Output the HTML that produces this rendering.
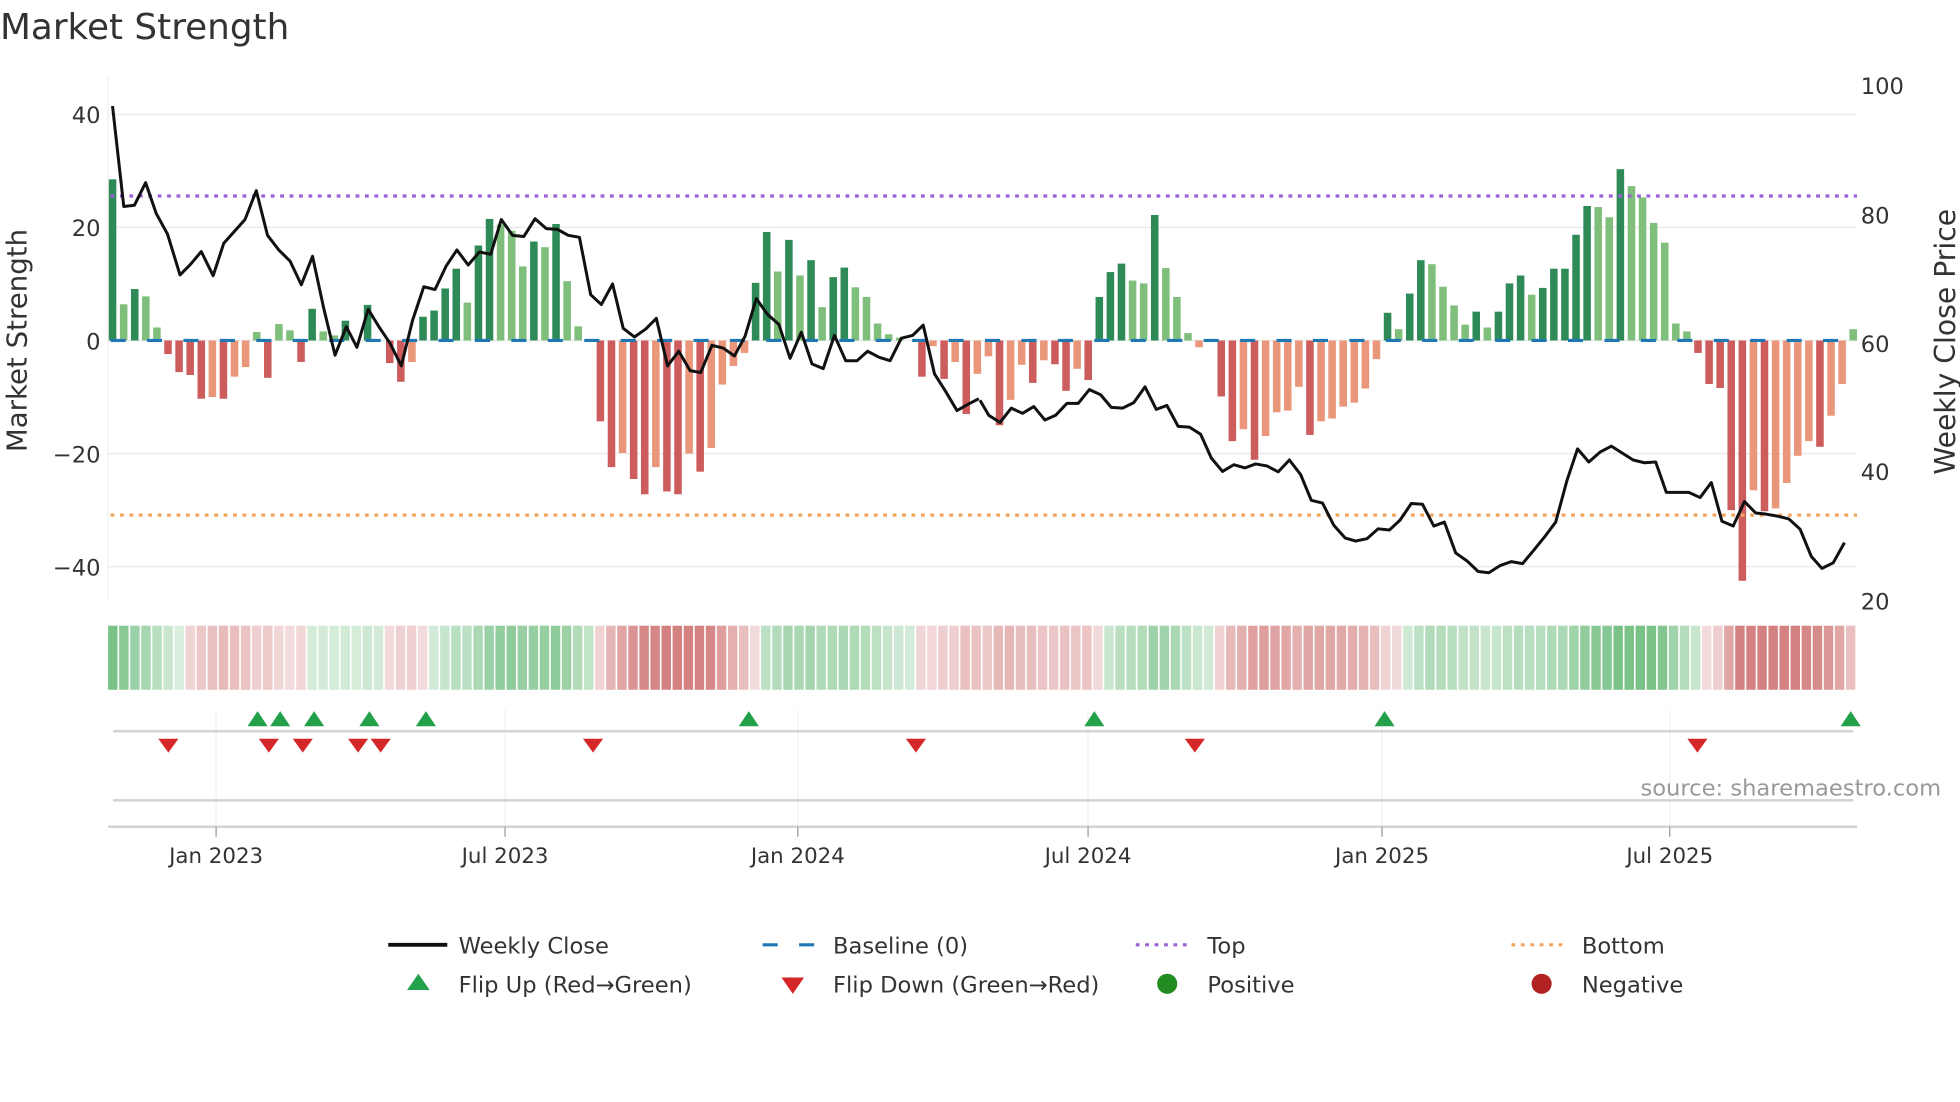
<!DOCTYPE html>
<html><head><meta charset="utf-8"><style>
html,body{margin:0;padding:0;background:#fff;}
svg{display:block;font-family:"DejaVu Sans","Liberation Sans",sans-serif;}
</style></head><body>
<svg id="s" width="1960" height="1102" viewBox="0 0 1560 877.1" xmlns="http://www.w3.org/2000/svg">
<defs><clipPath id="hc"><rect x="86" y="490" width="1392" height="70"/></clipPath></defs>
<rect width="1560" height="878" fill="#fff"/>
<text x="0" y="31" font-size="28.5" fill="#333">Market Strength</text>
<line x1="86" y1="62" x2="86" y2="478" stroke="#eee" stroke-width="1"/>
<g stroke="#ebebeb" stroke-width="1.2">
<line x1="86" y1="91" x2="1478" y2="91"/><line x1="86" y1="181" x2="1478" y2="181"/>
<line x1="86" y1="271" x2="1478" y2="271"/><line x1="86" y1="361" x2="1478" y2="361"/>
<line x1="86" y1="451" x2="1478" y2="451"/></g>
<g font-size="18" fill="#333" text-anchor="end">
<text x="80" y="98">40</text><text x="80" y="188">20</text><text x="80" y="278">0</text>
<text x="80" y="368">−20</text><text x="80" y="458">−40</text></g>
<g font-size="18" fill="#333">
<text x="1481" y="75">100</text><text x="1481" y="178">80</text><text x="1481" y="280">60</text>
<text x="1481" y="382">40</text><text x="1481" y="485">20</text></g>
<text transform="translate(21,271) rotate(-90)" font-size="22" fill="#333" text-anchor="middle">Market Strength</text>
<text transform="translate(1556,272) rotate(-90)" font-size="22.5" fill="#333" text-anchor="middle">Weekly Close Price</text>
<g id="bars"></g>
<line x1="88" y1="271" x2="1478" y2="271" stroke="#1f77b4" stroke-width="2.5" stroke-dasharray="12 17"/>
<line x1="88" y1="156" x2="1478" y2="156" stroke="#9b5fd6" stroke-width="2.5" stroke-dasharray="3 4.5"/>
<line x1="88" y1="410" x2="1478" y2="410" stroke="#f2a35e" stroke-width="2.5" stroke-dasharray="3 4.5"/>
<polyline fill="none" stroke="#111" stroke-width="3" vector-effect="non-scaling-stroke" stroke-linejoin="round" transform="matrix(0.4975 0 0 0.3148 0 0)" points="180,268 198,522 215,519 233,462 250,540 268,592 288,695 305,668 322,636 341,697 358,615 375,585 392,555 410,482 428,595 446,632 464,660 482,720 500,648 518,780 536,898 554,826 571,878 589,782 607,828 624,868 642,925 660,810 678,725 696,732 714,672 731,632 749,670 767,637 785,643 802,555 820,595 838,598 856,553 874,578 892,580 909,595 927,600 945,745 962,770 980,718 997,830 1015,852 1033,832 1050,805 1068,925 1086,888 1104,937 1121,942 1139,873 1157,880 1175,900 1192,850 1210,755 1228,795 1246,820 1264,906 1282,840 1299,920 1317,932 1335,848 1353,912 1371,912 1388,888 1406,903 1424,912 1442,855 1460,848 1477,822 1495,945 1513,990 1531,1038 1549,1022 1566,1008"/>
<polyline fill="none" stroke="#111" stroke-width="3" vector-effect="non-scaling-stroke" stroke-linejoin="round" transform="matrix(0.4975 0 0 0.3148 780 0)" points="0,1012 14,1050 32,1068 50,1032 68,1045 86,1028 104,1062 121,1050 139,1020 157,1020 175,985 193,998 210,1030 228,1032 246,1018 264,978 282,1035 299,1025 317,1078 335,1080 353,1098 370,1158 388,1192 406,1175 424,1183 441,1173 459,1178 477,1193 495,1163 513,1200 530,1265 548,1272 566,1328 584,1360 601,1368 619,1362 637,1337 655,1340 672,1315 690,1273 708,1275 726,1330 743,1320 761,1398 779,1418 797,1445 814,1448 832,1430 850,1420 868,1425 885,1393 903,1358 921,1320 939,1215 956,1135 974,1168 992,1143 1010,1128 1027,1145 1045,1163 1063,1170 1081,1168 1098,1245 1116,1245 1134,1245 1152,1258 1170,1220 1187,1318 1205,1330 1223,1268 1241,1297 1258,1300 1276,1305 1294,1312 1312,1338 1330,1407 1347,1437 1365,1423 1383,1372"/>
<g id="heat" clip-path="url(#hc)"></g>
<g stroke="#eef0f2" stroke-width="1">
<line x1="172" y1="565" x2="172" y2="658"/><line x1="402" y1="565" x2="402" y2="658"/>
<line x1="635" y1="565" x2="635" y2="658"/><line x1="866" y1="565" x2="866" y2="658"/>
<line x1="1100" y1="565" x2="1100" y2="658"/><line x1="1329" y1="565" x2="1329" y2="658"/></g>
<line x1="90" y1="582" x2="1475" y2="582" stroke="#d3d3d3" stroke-width="2"/>
<line x1="90" y1="637" x2="1475" y2="637" stroke="#d3d3d3" stroke-width="2"/>
<line x1="86" y1="658" x2="1478" y2="658" stroke="#d3d3d3" stroke-width="2"/>
<g stroke="#999" stroke-width="1">
<line x1="172" y1="658" x2="172" y2="666"/><line x1="402" y1="658" x2="402" y2="666"/>
<line x1="635" y1="658" x2="635" y2="666"/><line x1="866" y1="658" x2="866" y2="666"/>
<line x1="1100" y1="658" x2="1100" y2="666"/><line x1="1329" y1="658" x2="1329" y2="666"/></g>
<g id="mk"></g>
<text x="1545" y="633" font-size="18" fill="#999" text-anchor="end">source: sharemaestro.com</text>
<g font-size="17" fill="#333" text-anchor="middle">
<text x="172" y="687">Jan 2023</text><text x="402" y="687">Jul 2023</text><text x="635" y="687">Jan 2024</text>
<text x="866" y="687">Jul 2024</text><text x="1100" y="687">Jan 2025</text><text x="1329" y="687">Jul 2025</text></g>
<g font-size="18" fill="#333">
<line x1="309" y1="752" x2="356" y2="752" stroke="#111" stroke-width="3"/>
<text x="365" y="759">Weekly Close</text>
<line x1="607" y1="752" x2="650" y2="752" stroke="#1f77b4" stroke-width="2.5" stroke-dasharray="12 17"/>
<text x="663" y="759">Baseline (0)</text>
<line x1="904" y1="752" x2="948" y2="752" stroke="#9b5fd6" stroke-width="2.5" stroke-dasharray="3 4.5"/>
<text x="961" y="759">Top</text>
<line x1="1203" y1="752" x2="1247" y2="752" stroke="#f2a35e" stroke-width="2.5" stroke-dasharray="3 4.5"/>
<text x="1259" y="759">Bottom</text>
<polygon points="324,788 342,788 333,775" fill="#22a04a"/>
<text x="365" y="790">Flip Up (Red→Green)</text>
<polygon points="622,778 640,778 631,791" fill="#d62728"/>
<text x="663" y="790">Flip Down (Green→Red)</text>
<circle cx="929" cy="783" r="8" fill="#228b22"/>
<text x="961" y="790">Positive</text>
<circle cx="1227" cy="783" r="8" fill="#b22222"/>
<text x="1259" y="790">Negative</text>
</g>
</svg>
<script>
var v=[28.5,6.4,9.1,7.8,2.3,-2.4,-5.6,-6.1,-10.3,-10,-10.3,-6.4,-4.7,1.5,-6.6,2.9,1.8,-3.8,5.6,1.6,0.9,3.5,0,6.3,0,-4,-7.3,-3.8,4.2,5.3,9.2,12.7,6.7,16.8,21.5,20.5,19.4,13.1,17.5,16.5,20.6,10.5,2.5,0,-14.3,-22.4,-19.9,-24.5,-27.2,-22.4,-26.7,-27.2,-20,-23.2,-19,-7.8,-4.5,-2.2,10.2,19.2,12.2,17.8,11.5,14.2,5.9,11.2,12.9,9.4,7.7,3,1.1,0.5,0,-6.4,-1,-6.8,-3.8,-13,-5.9,-2.8,
-15,-10.5,-4.3,-7.5,-3.5,-4.2,-8.9,-5,-7,7.7,12.1,13.6,10.6,10.1,22.2,12.8,7.7,1.3,-1.2,0,-9.9,-17.8,-15.7,-21.1,-16.9,-12.7,-12.4,-8.2,-16.7,-14.3,-13.8,-11.7,-11,-8.5,-3.3,4.9,2,8.3,14.2,13.5,9.5,6.2,2.8,5.1,2.3,5.1,10.1,11.5,8.1,9.3,12.7,12.7,18.7,23.8,23.6,21.8,30.3,27.3,25.3,20.8,17.3,3,1.6,-2.2,-7.7,-8.4,-30,-42.5,-26.5,-30.2,-29.7,-25.2,-20.4,-17.8,-18.8,-13.3,-7.7,2];
var ns="http://www.w3.org/2000/svg",b=document.getElementById('bars'),h=document.getElementById('heat'),m=document.getElementById('mk');
var n=v.length,p=(1475-89.6)/(n-1),hp=(1478-86)/n;
function el(t,a,par){var e=document.createElementNS(ns,t);for(var k in a)e.setAttribute(k,a[k]);par.appendChild(e);return e;}
var prev=0,ema=v[0];
for(var i=0;i<n;i++){var x=89.6+i*p,val=v[i];
 var dark=Math.abs(val)>=Math.abs(prev)||i==0; prev=val;
 var c=val>=0?(dark?'#2e8b57':'#7fbf7b'):(dark?'#cd5c5c':'#e9967a');
 if(val!=0){var y=271-val*4.5;el('rect',{x:x-3,y:Math.min(y,271),width:6,height:Math.abs(val*4.5),fill:c},b);}
 ema=ema*0.6+val*0.4;
 var a=Math.min(0.72,0.2+Math.abs(ema)/45);
 var hc=ema>=0?'rgba(70,170,90,'+a+')':'rgba(195,80,80,'+a+')';
 el('rect',{x:86+i*hp,y:498,width:hp-1.3,height:51,fill:hc},h);
}
[205,223,250,294,339,596,871,1102,1473].forEach(function(x){el('polygon',{points:(x-8)+',578 '+(x+8)+',578 '+x+',566',fill:'#22a04a'},m);});
[134,214,241,285,303,472,729,951,1351].forEach(function(x){el('polygon',{points:(x-8)+',588 '+(x+8)+',588 '+x+',599',fill:'#d62728'},m);});
</script>
</body></html>
